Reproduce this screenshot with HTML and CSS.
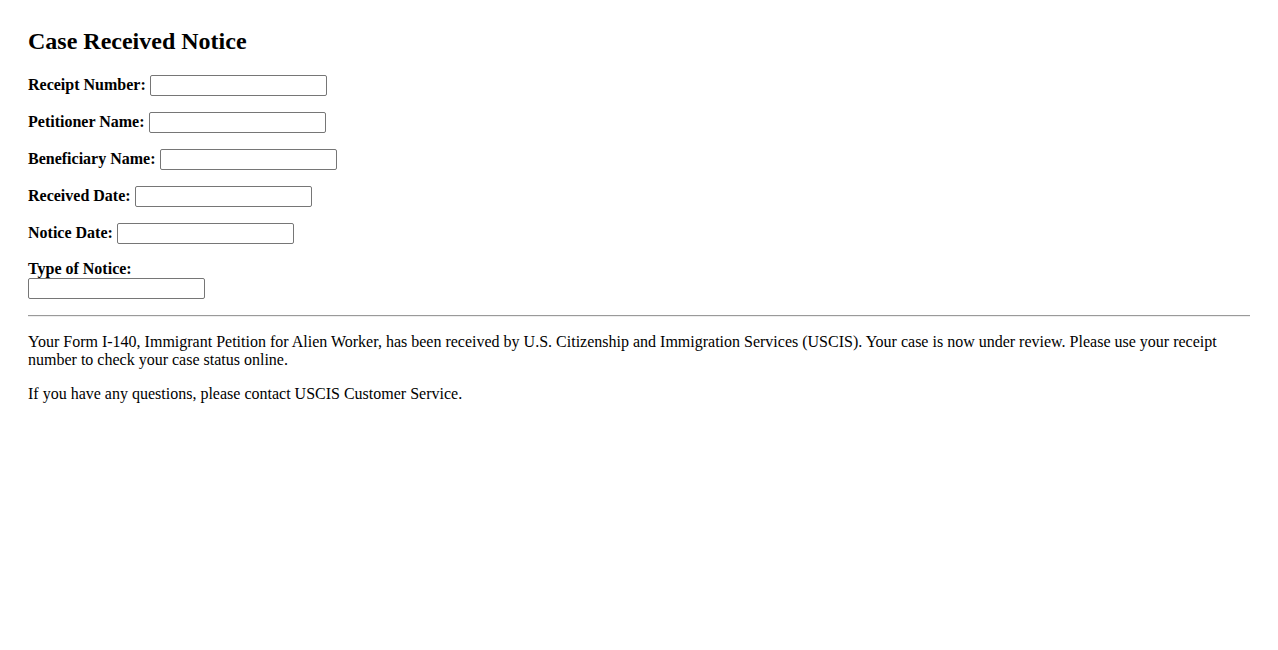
FILE: index.html
```html
<!DOCTYPE html>
<html>
<head>
<meta charset="utf-8">
<title>Case Received Notice</title>
<link rel="stylesheet" href="styles.css">
</head>
<body>
<div class="container">
  <h2 class="title">Case Received Notice</h2>
  <div class="row"><label class="lbl" for="receipt">Receipt Number:</label> <input class="field" type="text" id="receipt"></div>
  <div class="row"><label class="lbl" for="petitioner">Petitioner Name:</label> <input class="field" type="text" id="petitioner"></div>
  <div class="row"><label class="lbl" for="beneficiary">Beneficiary Name:</label> <input class="field" type="text" id="beneficiary"></div>
  <div class="row"><label class="lbl" for="received">Received Date:</label> <input class="field" type="text" id="received"></div>
  <div class="row"><label class="lbl" for="notice">Notice Date:</label> <input class="field" type="text" id="notice"></div>
  <div class="row"><label class="lbl" for="type">Type of Notice:</label><br><input class="field" type="text" id="type"></div>
  <hr class="rule">
  <p class="text">Your Form I-140, Immigrant Petition for Alien Worker, has been received by U.S. Citizenship and Immigration Services (USCIS). Your case is now under review. Please use your receipt number to check your case status online.</p>
  <p class="text">If you have any questions, please contact USCIS Customer Service.</p>
</div>
</body>
</html>
```

FILE: styles.css
```css
html, body {
  background: #fff;
}
body {
  margin: 8px;
  font-family: "Liberation Serif", "Times New Roman", serif;
  font-size: 16px;
  color: #000;
}
.container {
  padding: 20px;
}
.title {
  font-size: 24px;
  font-weight: bold;
  margin: 0 0 20px;
}
.row {
  margin-bottom: 16px;
}
.lbl {
  font-weight: bold;
}
.field {
  box-sizing: border-box;
  width: 177px;
  height: 21px;
  padding: 1px 2px;
  border: 1px solid #767676;
  border-radius: 2px;
  font-family: Arial, "Liberation Sans", sans-serif;
  font-size: 13.33px;
  background: #fff;
  vertical-align: baseline;
}
.rule {
  margin: 0;
  border: 0;
  border-top: 1px solid #9a9a9a;
  border-bottom: 1px solid #eee;
}
.text {
  margin: 16px 0;
}
```
